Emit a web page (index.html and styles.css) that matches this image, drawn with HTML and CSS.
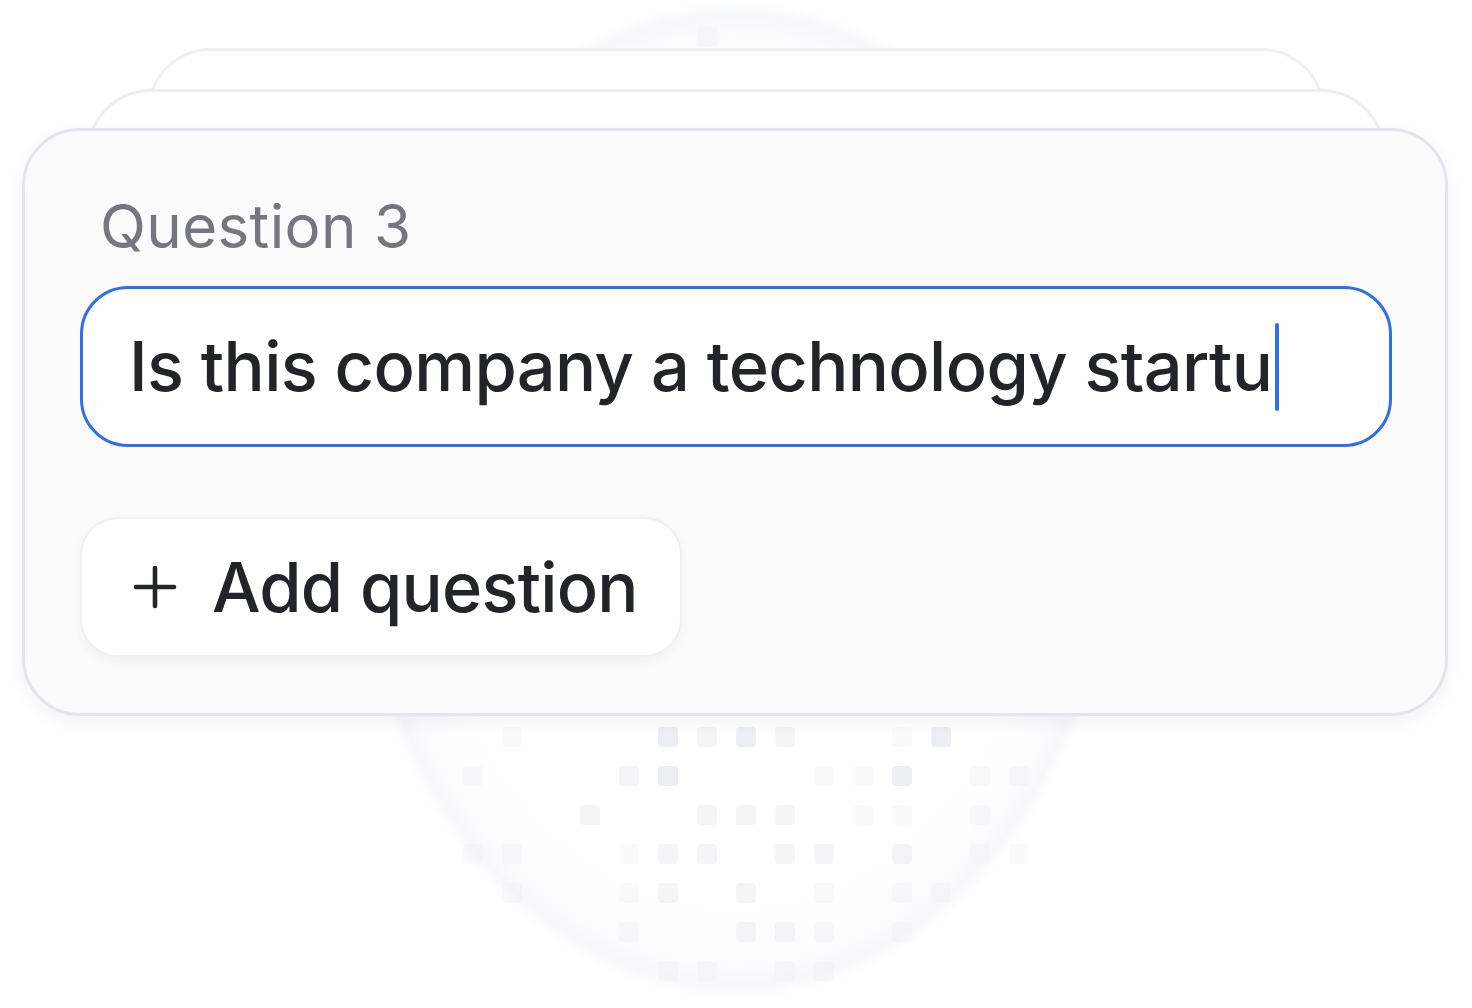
FILE: index.html
```html
<!DOCTYPE html>
<html lang="en">
<head>
<meta charset="utf-8">
<title>Question 3</title>
<link rel="stylesheet" href="styles.css">
</head>
<body>
<div class="scene">
  <div class="backdrop">
    <div class="halo"></div>
    <div class="dots">
      <span class="dot d1" style="left:697px;top:27px"></span>

      <span class="dot d1" style="left:502px;top:727px"></span>
      <span class="dot d3" style="left:658px;top:727px"></span>
      <span class="dot d2" style="left:697px;top:727px"></span>
      <span class="dot d3" style="left:736px;top:727px"></span>
      <span class="dot d2" style="left:775px;top:727px"></span>
      <span class="dot d1" style="left:892px;top:727px"></span>
      <span class="dot d3" style="left:931px;top:727px"></span>

      <span class="dot d1" style="left:463px;top:766px"></span>
      <span class="dot d2" style="left:619px;top:766px"></span>
      <span class="dot d3" style="left:658px;top:766px"></span>
      <span class="dot d1" style="left:814px;top:766px"></span>
      <span class="dot d1" style="left:853px;top:766px"></span>
      <span class="dot d3" style="left:892px;top:766px"></span>
      <span class="dot d1" style="left:970px;top:766px"></span>
      <span class="dot d1" style="left:1009px;top:766px"></span>

      <span class="dot d2" style="left:580px;top:805px"></span>
      <span class="dot d2" style="left:697px;top:805px"></span>
      <span class="dot d2" style="left:736px;top:805px"></span>
      <span class="dot d2" style="left:775px;top:805px"></span>
      <span class="dot d1" style="left:853px;top:805px"></span>
      <span class="dot d1" style="left:892px;top:805px"></span>
      <span class="dot d1" style="left:970px;top:805px"></span>

      <span class="dot d1" style="left:463px;top:844px"></span>
      <span class="dot d1" style="left:502px;top:844px"></span>
      <span class="dot d1" style="left:619px;top:844px"></span>
      <span class="dot d2" style="left:658px;top:844px"></span>
      <span class="dot d2" style="left:697px;top:844px"></span>
      <span class="dot d2" style="left:775px;top:844px"></span>
      <span class="dot d2" style="left:814px;top:844px"></span>
      <span class="dot d2" style="left:892px;top:844px"></span>
      <span class="dot d1" style="left:970px;top:844px"></span>
      <span class="dot d1" style="left:1009px;top:844px"></span>

      <span class="dot d1" style="left:502px;top:883px"></span>
      <span class="dot d1" style="left:619px;top:883px"></span>
      <span class="dot d2" style="left:658px;top:883px"></span>
      <span class="dot d2" style="left:736px;top:883px"></span>
      <span class="dot d1" style="left:814px;top:883px"></span>
      <span class="dot d1" style="left:892px;top:883px"></span>
      <span class="dot d1" style="left:931px;top:883px"></span>

      <span class="dot d1" style="left:619px;top:922px"></span>
      <span class="dot d2" style="left:736px;top:922px"></span>
      <span class="dot d2" style="left:775px;top:922px"></span>
      <span class="dot d1" style="left:814px;top:922px"></span>
      <span class="dot d1" style="left:892px;top:922px"></span>

      <span class="dot d1" style="left:658px;top:961px"></span>
      <span class="dot d1" style="left:697px;top:961px"></span>
      <span class="dot d1" style="left:775px;top:961px"></span>
      <span class="dot d1" style="left:814px;top:961px"></span>
    </div>
  </div>

  <div class="back-card back-card-far"></div>
  <div class="back-card back-card-near"></div>

  <section class="card">
    <div class="label">Question 3</div>
    <div class="field">
      <span class="field-text">Is this company a technology startu</span><span class="caret"></span>
    </div>
    <div class="actions">
      <button class="add-btn" type="button">
        <svg class="plus" viewBox="0 0 44 44" width="44" height="44" aria-hidden="true">
          <path d="M22 3 V41 M3 22 H41" fill="none" stroke="#232428" stroke-width="4.6" stroke-linecap="round"/>
        </svg>
        <span class="add-text">Add question</span>
      </button>
    </div>
  </section>
</div>
</body>
</html>
```

FILE: styles.css
```css
html, body {
  margin: 0;
  padding: 0;
  background: #ffffff;
}

body {
  width: 1472px;
  height: 1008px;
  overflow: hidden;
  font-family: Inter, "Noto Sans", "Liberation Sans", sans-serif;
}

.scene {
  position: relative;
  width: 1472px;
  height: 1008px;
  padding-top: 128px;
  box-sizing: border-box;
}

.backdrop {
  position: absolute;
  inset: 0;
  z-index: 0;
  pointer-events: none;
}

.halo {
  position: absolute;
  left: 350px;
  top: 0;
  width: 770px;
  height: 1000px;
  border-radius: 50%;
  background: radial-gradient(closest-side, rgba(246, 247, 249, 0) 80%, rgba(244, 245, 248, 0.35) 93%, rgba(240, 241, 245, 0.5) 97%, rgba(240, 241, 245, 0) 100%);
}

.dot {
  position: absolute;
  width: 20px;
  height: 20px;
  border-radius: 4px;
  background: #e6e7ec;
}

.dot.d1 { opacity: 0.2; }
.dot.d2 { opacity: 0.42; }
.dot.d3 { opacity: 0.72; }

.back-card {
  position: absolute;
  z-index: 1;
  height: 300px;
  background: #ffffff;
  border: 3px solid #eef0f3;
  border-radius: 64px;
  box-sizing: border-box;
}

.back-card-far {
  left: 147px;
  width: 1178px;
  top: 48px;
}

.back-card-near {
  left: 87px;
  width: 1298px;
  top: 89px;
  border-color: #eceef2;
}

.card {
  position: relative;
  z-index: 2;
  margin-left: 22px;
  width: 1426px;
  height: 588px;
  box-sizing: border-box;
  background: #fbfbfc;
  border: 3px solid #e4e5ea;
  border-radius: 58px;
  padding: 59px 53px 0 55px;
  box-shadow: 0 6px 18px rgba(30, 35, 60, 0.06);
}

.label {
  font-size: 60px;
  line-height: 73px;
  color: #76777c;
  padding-left: 20px;
  letter-spacing: 0.4px;
}

.field {
  margin-top: 23px;
  height: 161px;
  box-sizing: border-box;
  border: 3.5px solid #2f6fea;
  border-radius: 48px;
  background: #ffffff;
  display: flex;
  align-items: center;
  padding-left: 46px;
}

.field-text {
  font-size: 68.5px;
  font-weight: 450;
  color: #232428;
  letter-spacing: -0.65px;
  white-space: nowrap;
}

.caret {
  display: inline-block;
  width: 4px;
  height: 88px;
  border-radius: 2px;
  background: #2f6fea;
  margin-left: 3px;
}

.actions {
  margin-top: 70px;
  display: flex;
}

.add-btn {
  display: flex;
  align-items: center;
  gap: 35px;
  height: 140px;
  width: 602px;
  box-sizing: border-box;
  padding: 0 0 0 51px;
  background: #ffffff;
  border: 2px solid #eef0f3;
  border-radius: 38px;
  box-shadow: 0 4px 10px rgba(30, 35, 60, 0.05);
  font-family: inherit;
  cursor: pointer;
}

.plus {
  display: block;
  flex: none;
}

.add-text {
  font-size: 68.5px;
  font-weight: 450;
  color: #232428;
  letter-spacing: -0.75px;
  white-space: nowrap;
}
```
